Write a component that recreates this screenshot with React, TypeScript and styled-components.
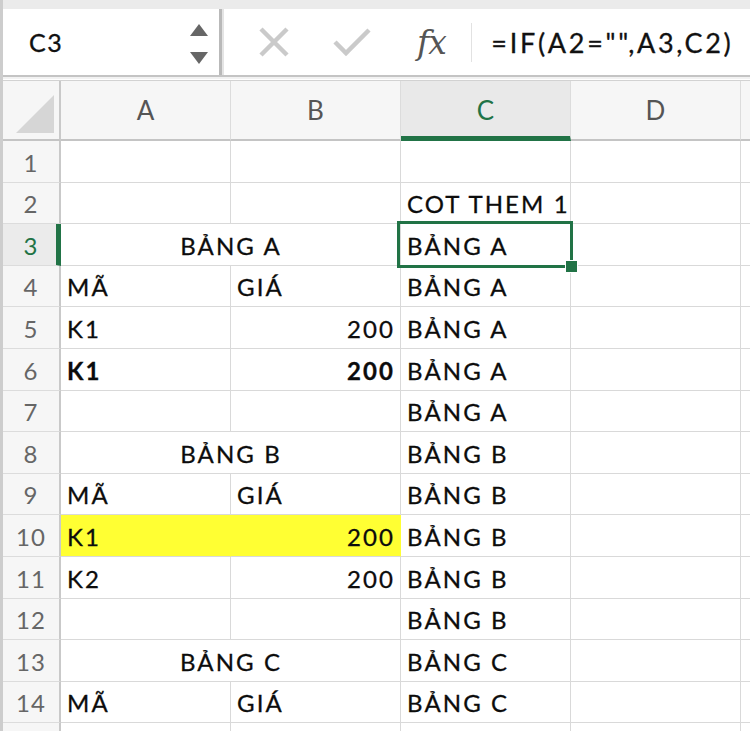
import React from "react";
import styled, { createGlobalStyle } from "styled-components";

const GREEN = "#217346";
const GRID = "#d9d9d9";
const ROW_H = 41.6;

const GlobalStyle = createGlobalStyle`
  body {
    margin: 0;
    padding: 0;
    overflow: hidden;
    background: #ffffff;
    font-family: Lato, "Liberation Sans", sans-serif;
  }
`;

const StyledApp = styled.div`
  width: 750px;
  height: 731px;
  overflow: hidden;
  display: flex;
  flex-direction: column;
  box-sizing: border-box;
  border-left: 3px solid #cdcdcd;
`;

const TopStrip = styled.div`
  height: 9px;
  background: #ebebeb;
  flex: none;
`;

const FormulaBar = styled.div`
  height: 66px;
  flex: none;
  display: flex;
  align-items: stretch;
  border-bottom: 2px solid #c4c4c4;
  box-shadow: 0 2px 0 #f2f2f2;
  margin-bottom: 3px;
`;

const NameBox = styled.div`
  width: 219px;
  display: flex;
  align-items: center;
  justify-content: space-between;
  padding: 0 10px 0 26px;
  box-sizing: border-box;
  background: #fff;
  border-right: 3px solid #b9b9b9;
  font-size: 25px;
  letter-spacing: 1.5px;
  color: #111;
  -webkit-text-stroke: 0.3px #111;
`;

const Spinner = styled.div`
  display: flex;
  flex-direction: column;
  gap: 14px;
  margin-top: 4px;
`;

const EditArea = styled.div`
  flex: 1;
  display: flex;
  align-items: center;
  padding-left: 34px;
  border-left: 2px solid #e4e4e4;
  background: #fff;
`;

const IconSlot = styled.div<{ $gap: number }>`
  display: flex;
  align-items: center;
  margin-right: ${(p) => p.$gap}px;
`;

const Fx = styled.div`
  font-family: "DejaVu Serif", "Liberation Serif", serif;
  font-style: italic;
  font-size: 33px;
  color: #555;
  letter-spacing: -1px;
`;

const Divider = styled.div`
  width: 1.5px;
  height: 39px;
  background: #e2e2e2;
  margin: 0 19px 0 25px;
`;

const FormulaText = styled.div`
  font-size: 27px;
  letter-spacing: 2.7px;
  color: #111;
  -webkit-text-stroke: 0.3px #111;
  white-space: nowrap;
`;

const Sheet = styled.div`
  display: grid;
  grid-template-columns: 58px repeat(4, 170px) 1fr;
  grid-template-rows: 60px;
  grid-auto-rows: ${ROW_H}px;
  border-top: 1px solid #d2d2d2;
  flex: none;
`;

const Corner = styled.div`
  background: #f6f6f6;
  border-right: 2px solid #c9c9c9;
  border-bottom: 2px solid #c4c4c4;
  display: flex;
  align-items: flex-end;
  justify-content: flex-end;
  padding: 0 4px 5px 0;
  box-sizing: border-box;
`;

const ColHeader = styled.div<{ $active?: boolean }>`
  background: ${(p) => (p.$active ? "#e9e9e9" : "#f6f6f6")};
  border-right: 1.5px solid #dcdcdc;
  border-bottom: ${(p) => (p.$active ? `5px solid ${GREEN}` : "2px solid #c4c4c4")};
  color: ${(p) => (p.$active ? GREEN : "#555")};
  font-size: 26px;
  display: flex;
  align-items: center;
  justify-content: center;
  padding-top: ${(p) => (p.$active ? 3 : 0)}px;
  box-sizing: border-box;
`;

const RowHeader = styled.div<{ $active?: boolean }>`
  background: ${(p) => (p.$active ? "#ebebeb" : "#f6f6f6")};
  border-right: ${(p) => (p.$active ? `5px solid ${GREEN}` : "2px solid #c9c9c9")};
  border-bottom: 1.5px solid #dcdcdc;
  color: ${(p) => (p.$active ? GREEN : "#666")};
  font-size: 24px;
  letter-spacing: 1.2px;
  display: flex;
  align-items: flex-end;
  justify-content: center;
  padding: 0 0 5px ${(p) => (p.$active ? 3 : 0)}px;
  box-sizing: border-box;
`;

const Cell = styled.div<{
  $align?: "left" | "right" | "center";
  $bold?: boolean;
  $fill?: string;
  $span?: number;
  $selected?: boolean;
}>`
  position: relative;
  grid-column: span ${(p) => p.$span ?? 1};
  background: ${(p) => p.$fill ?? "#fff"};
  border-right: 1.5px solid ${(p) => (p.$fill ? p.$fill : GRID)};
  border-bottom: 1.5px solid ${GRID};
  display: flex;
  align-items: flex-end;
  justify-content: ${(p) =>
    p.$align === "right" ? "flex-end" : p.$align === "center" ? "center" : "flex-start"};
  padding: 0 5px 5px 6px;
  box-sizing: border-box;
  font-size: 24px;
  letter-spacing: 2.1px;
  font-weight: ${(p) => (p.$bold ? 700 : 400)};
  color: #0c0c0c;
  -webkit-text-stroke: 0.3px #0c0c0c;
  white-space: nowrap;
  z-index: ${(p) => (p.$selected ? 2 : "auto")};
`;

const Selection = styled.div`
  position: absolute;
  top: -3px;
  left: -4px;
  right: -3px;
  bottom: -3px;
  border: 3px solid ${GREEN};
  pointer-events: none;
`;

const FillHandle = styled.div`
  position: absolute;
  right: -8px;
  bottom: -8px;
  width: 11px;
  height: 11px;
  background: ${GREEN};
  border: 1.5px solid #fff;
`;

type CellData = {
  text?: string;
  align?: "left" | "right" | "center";
  bold?: boolean;
  fill?: string;
  span?: number;
};

const YELLOW = "#ffff33";

const colC = (n: number) =>
  n === 2
    ? "COT THEM 1"
    : n >= 3 && n <= 7
    ? "BẢNG A"
    : n >= 8 && n <= 12
    ? "BẢNG B"
    : n >= 13 && n <= 14
    ? "BẢNG C"
    : "";

const abCells = (n: number): CellData[] => {
  switch (n) {
    case 3:
      return [{ text: "BẢNG A", align: "center", span: 2 }];
    case 8:
      return [{ text: "BẢNG B", align: "center", span: 2 }];
    case 13:
      return [{ text: "BẢNG C", align: "center", span: 2 }];
    case 4:
    case 9:
    case 14:
      return [{ text: "MÃ" }, { text: "GIÁ" }];
    case 5:
      return [{ text: "K1" }, { text: "200", align: "right" }];
    case 6:
      return [
        { text: "K1", bold: true },
        { text: "200", align: "right", bold: true },
      ];
    case 10:
      return [
        { text: "K1", fill: YELLOW },
        { text: "200", align: "right", fill: YELLOW },
      ];
    case 11:
      return [{ text: "K2" }, { text: "200", align: "right" }];
    default:
      return [{}, {}];
  }
};

const rows = Array.from({ length: 15 }, (_, i) => i + 1);

export default () => {
  return (
    <StyledApp className="App">
      <GlobalStyle />
      <TopStrip />
      <FormulaBar>
        <NameBox>
          <span>C3</span>
          <Spinner>
            <svg width="20" height="14" viewBox="0 0 20 14">
              <polygon points="10,1 19,13 1,13" fill="#666" />
            </svg>
            <svg width="20" height="14" viewBox="0 0 20 14">
              <polygon points="1,1 19,1 10,13" fill="#666" />
            </svg>
          </Spinner>
        </NameBox>
        <EditArea>
          <IconSlot $gap={43}>
            <svg width="32" height="30" viewBox="0 0 32 30">
              <path d="M3 2 L29 28 M29 2 L3 28" stroke="#cacaca" strokeWidth="4.5" />
            </svg>
          </IconSlot>
          <IconSlot $gap={46}>
            <svg width="38" height="30" viewBox="0 0 38 30">
              <path d="M2 15 L13 26 L36 3" stroke="#cacaca" strokeWidth="4.5" fill="none" />
            </svg>
          </IconSlot>
          <Fx>fx</Fx>
          <Divider />
          <FormulaText>=IF(A2="",A3,C2)</FormulaText>
        </EditArea>
      </FormulaBar>
      <Sheet>
        <Corner>
          <svg width="40" height="40" viewBox="0 0 40 40">
            <polygon points="39,1 39,39 1,39" fill="#d6d6d6" />
          </svg>
        </Corner>
        {["A", "B", "C", "D", ""].map((c) => (
          <ColHeader key={c || "E"} $active={c === "C"}>
            {c}
          </ColHeader>
        ))}
        {rows.map((n) => (
          <React.Fragment key={n}>
            <RowHeader $active={n === 3}>{n < 15 ? n : ""}</RowHeader>
            {abCells(n).map((c, i) => (
              <Cell
                key={i}
                $align={c.align}
                $bold={c.bold}
                $fill={c.fill}
                $span={c.span}
              >
                {c.text}
              </Cell>
            ))}
            <Cell $selected={n === 3}>
              {colC(n)}
              {n === 3 && (
                <Selection>
                  <FillHandle />
                </Selection>
              )}
            </Cell>
            <Cell />
            <Cell />
          </React.Fragment>
        ))}
      </Sheet>
    </StyledApp>
  );
};
